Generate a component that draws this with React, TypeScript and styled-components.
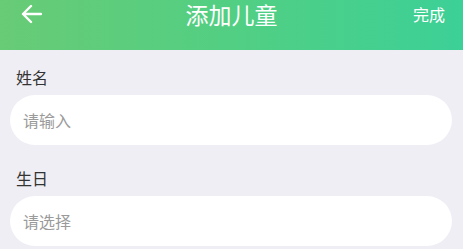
import styled, { createGlobalStyle } from 'styled-components'

const GlobalStyle = createGlobalStyle`
  html, body {
    margin: 0;
    padding: 0;
    background: #efeef4;
  }
  body {
    font-family: "Noto Sans CJK SC", "Noto Sans", sans-serif;
  }
`

const Page = styled.div`
  width: 463px;
  height: 249px;
  overflow: hidden;
  background: #efeef4;
`

const Header = styled.div`
  height: 50px;
  background: linear-gradient(90deg, #68cb76 0%, #52cf83 50%, #3cd097 100%);
  display: flex;
  align-items: flex-start;
  justify-content: space-between;
  padding: 0 18px 0 20px;
  box-sizing: border-box;
  position: relative;
`

const BackButton = styled.div`
  height: 28px;
  width: 28px;
  display: flex;
  align-items: center;
  justify-content: flex-start;
`

const Title = styled.div`
  position: absolute;
  left: 0;
  right: 0;
  top: 0;
  height: 28px;
  line-height: 28px;
  text-align: center;
  color: #ffffff;
  font-size: 23px;
  pointer-events: none;
`

const Done = styled.div`
  height: 28px;
  line-height: 28px;
  color: #ffffff;
  font-size: 16px;
`

const Form = styled.div`
  padding: 16px 10px 0 10px;
  display: flex;
  flex-direction: column;
`

const Field = styled.div<{ $gap?: number }>`
  display: flex;
  flex-direction: column;
  margin-top: ${p => p.$gap ?? 0}px;
`

const Label = styled.div`
  font-size: 16px;
  line-height: 22px;
  color: #333333;
  padding-left: 6px;
  margin-bottom: 7px;
`

const InputBox = styled.div`
  height: 50px;
  border-radius: 25px;
  background: #ffffff;
  display: flex;
  align-items: center;
  padding: 0 13px;
  width: 442px;
  box-sizing: border-box;
`

const Placeholder = styled.span`
  font-size: 16px;
  color: #9a9a9a;
`

const BackArrow = () => (
  <svg width="22" height="20" viewBox="0 0 22 20" fill="none">
    <path
      d="M21 10H3M11 2L3 10L11 18"
      stroke="#ffffff"
      strokeWidth="2.4"
      strokeLinecap="round"
      strokeLinejoin="round"
    />
  </svg>
)

export default function App() {
  return (
    <Page>
      <GlobalStyle />
      <Header>
        <BackButton>
          <BackArrow />
        </BackButton>
        <Title>添加儿童</Title>
        <Done>完成</Done>
      </Header>
      <Form>
        <Field>
          <Label>姓名</Label>
          <InputBox>
            <Placeholder>请输入</Placeholder>
          </InputBox>
        </Field>
        <Field $gap={22}>
          <Label>生日</Label>
          <InputBox>
            <Placeholder>请选择</Placeholder>
          </InputBox>
        </Field>
      </Form>
    </Page>
  )
}
